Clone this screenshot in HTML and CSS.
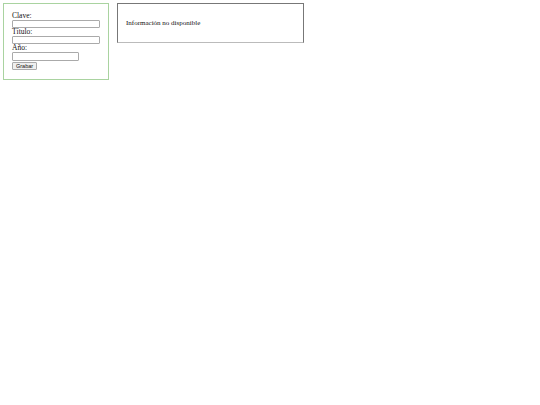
FILE: index.html
```html
<!DOCTYPE html>
<html>
<head>
<meta charset="utf-8">
<link rel="stylesheet" href="styles.css">
</head>
<body>
<div class="page">
  <form class="form-box">
    <label class="lbl">Clave:</label>
    <input class="field" type="text">
    <label class="lbl">Título:</label>
    <input class="field" type="text">
    <label class="lbl">Año:</label>
    <input class="field short" type="text">
    <button class="btn" type="button">Grabar</button>
  </form>
  <div class="info-box">
    <p class="info">Información no disponible</p>
  </div>
</div>
</body>
</html>
```
FILE: styles.css
```css
html, body { margin: 0; padding: 0; background: #fff; }
.page {
  display: flex;
  align-items: flex-start;
  gap: 8px;
  padding: 3px;
  font-family: "Liberation Serif", serif;
  color: #000;
}
.form-box {
  width: 88px;
  height: 64px;
  border: 1px solid #a9d3a0;
  padding: 8px 8px 3px 8px;
  display: flex;
  flex-direction: column;
  align-items: flex-start;
  margin: 0;
}
.lbl {
  font-size: 7.5px;
  line-height: 8px;
  display: block;
  color: #111;
}
.field {
  box-sizing: border-box;
  width: 88px;
  height: 8px;
  border: 1px solid #aaa;
  border-radius: 1px;
  padding: 0;
  margin: 0;
  background: #fff;
}
.field.short { width: 67px; height: 9px; }
.btn {
  margin-top: 1px;
  font-family: "Liberation Sans", sans-serif;
  font-size: 5.5px;
  height: 8px;
  padding: 0 3px;
  line-height: 6px;
  border: 1px solid #aaa;
  border-radius: 1px;
  background: #efefef;
  color: #111;
}
.info-box {
  box-sizing: border-box;
  width: 187px;
  height: 40px;
  border: 1px solid #777;
  border-bottom-color: #bbb;
  padding: 0 8px;
  display: flex;
  align-items: center;
}
.info {
  margin: 0;
  font-size: 7px;
  line-height: 8px;
  color: #111;
}
```
